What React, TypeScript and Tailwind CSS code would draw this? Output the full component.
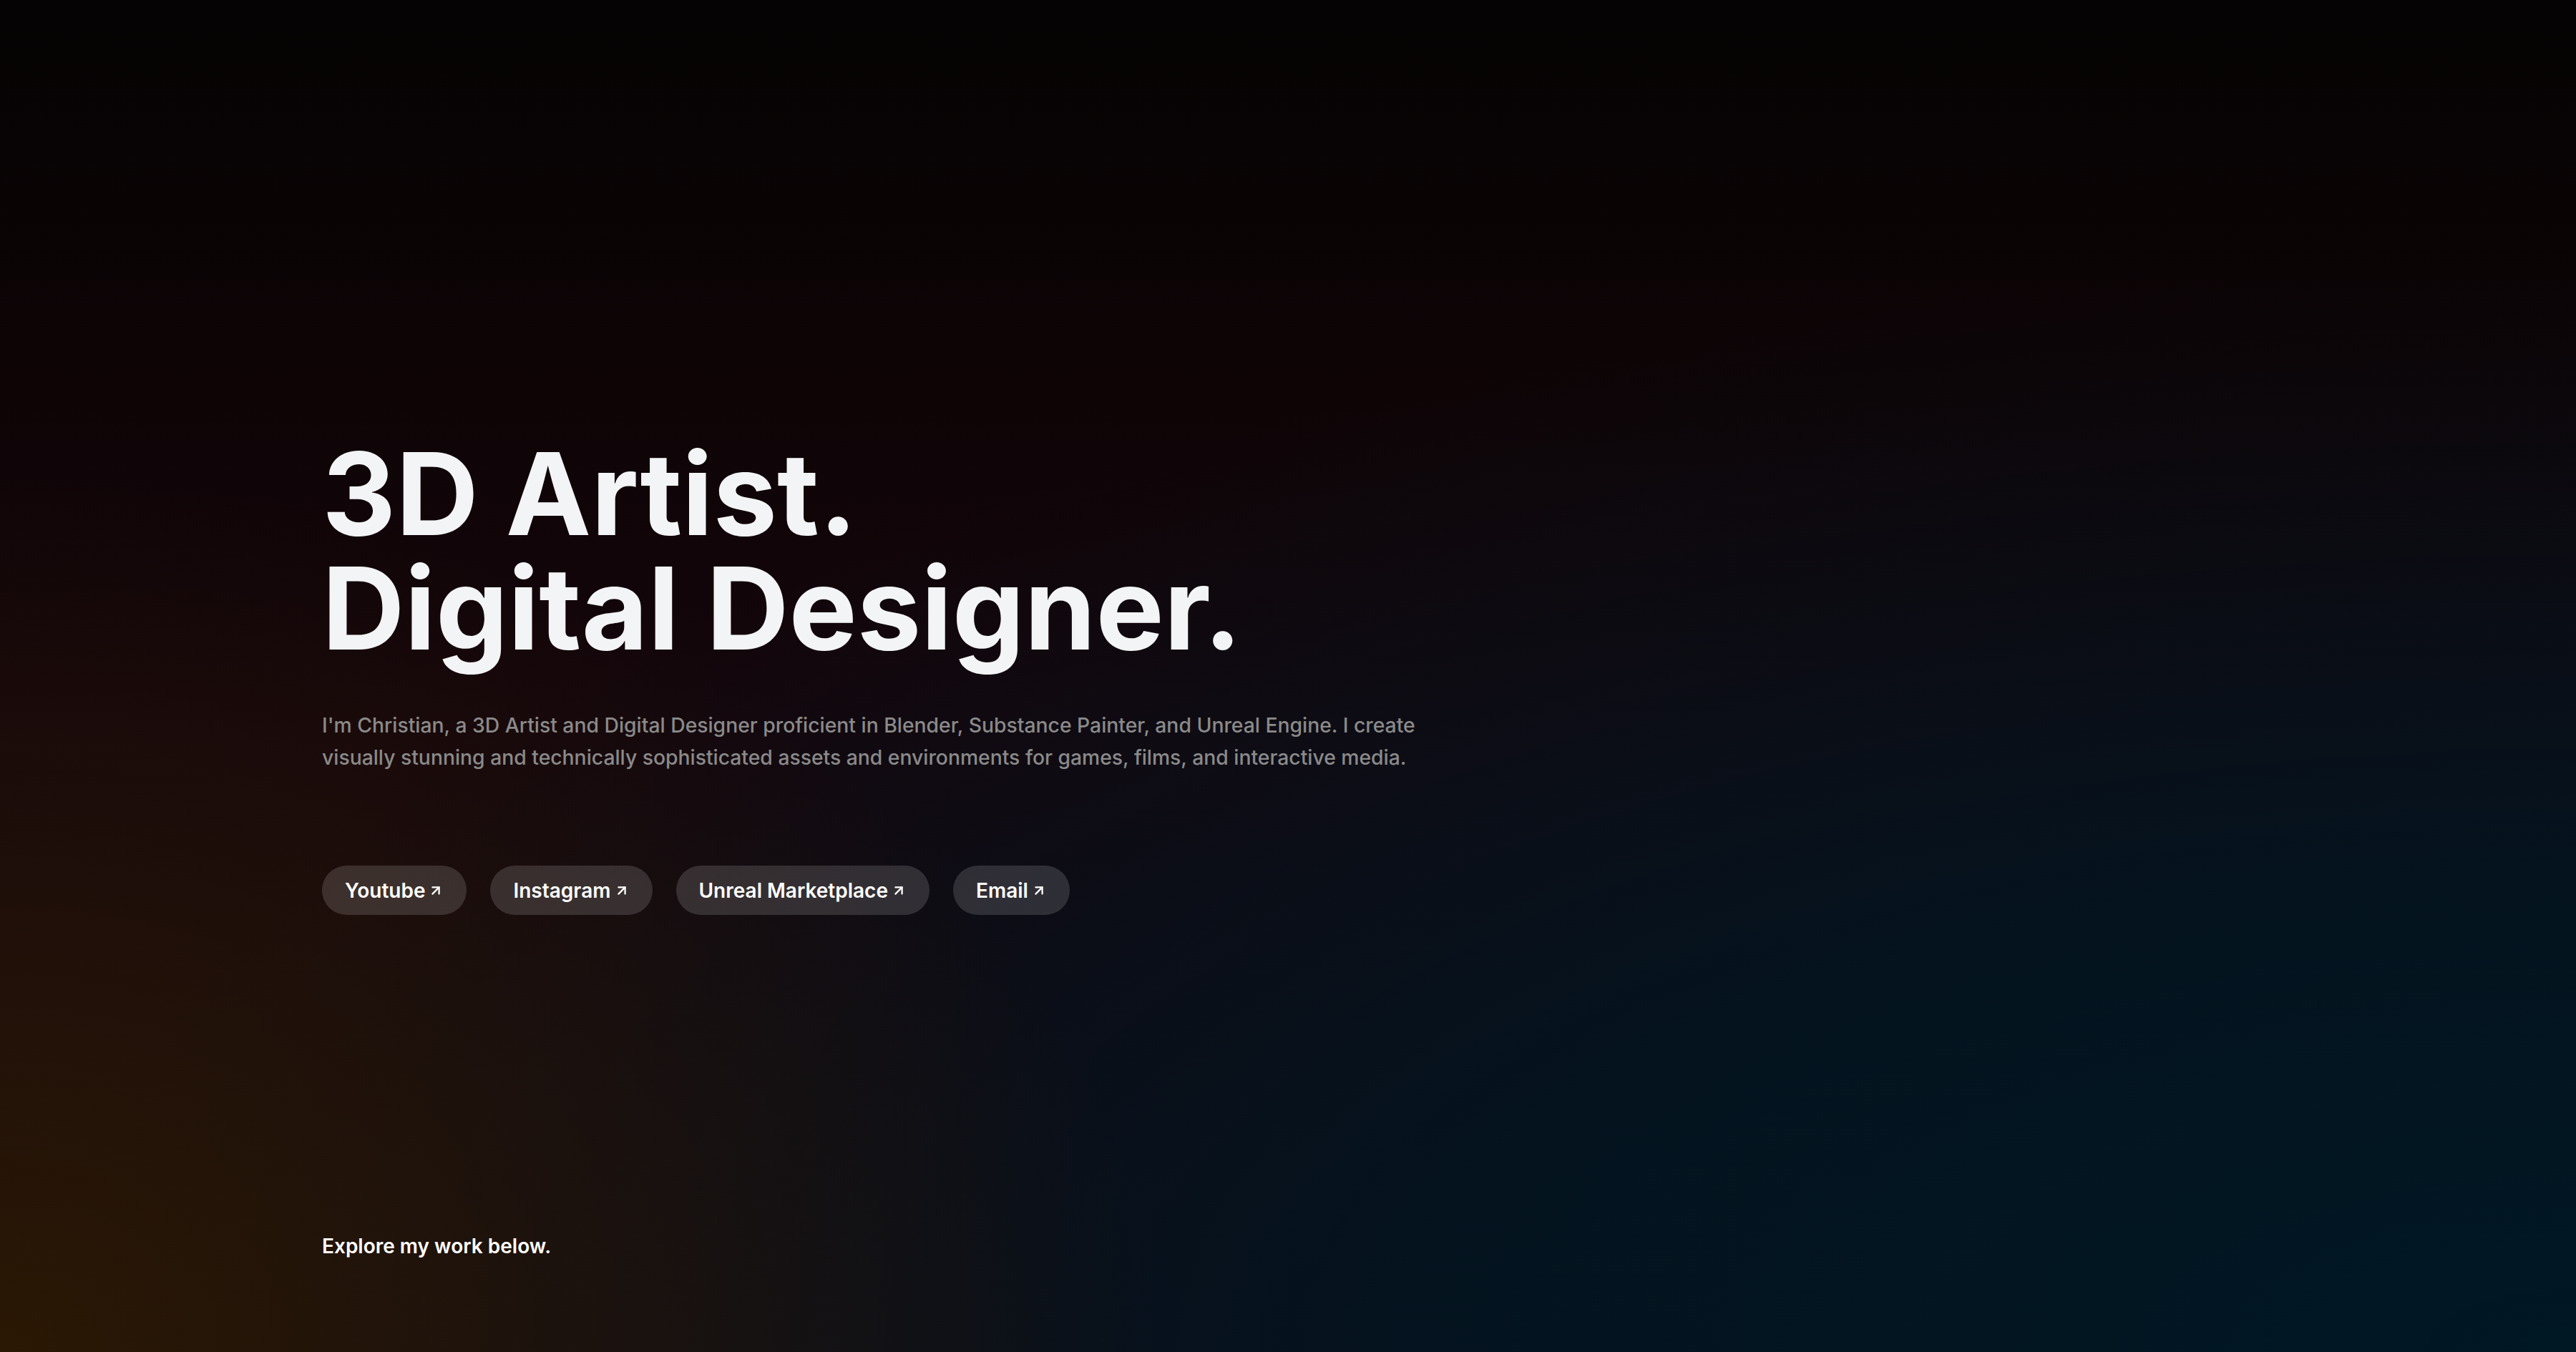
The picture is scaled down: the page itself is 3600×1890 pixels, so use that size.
import { ArrowUpRight } from 'lucide-react';

const links = ['Youtube', 'Instagram', 'Unreal Marketplace', 'Email'];

export default function App() {
  return (
    <main
      className="min-h-screen w-full font-['Inter',sans-serif] text-gray-100 bg-[radial-gradient(ellipse_45%_65%_at_0%_100%,#2a1804_0%,rgba(42,24,4,0.6)_40%,transparent_100%),radial-gradient(ellipse_100%_80%_at_100%_100%,#001824_0%,rgba(0,22,34,0.8)_45%,transparent_100%),linear-gradient(to_bottom,#050303_0%,#0e0406_30%,#15060c_55%,#130812_100%)]"
    >
      <div className="flex flex-col px-[450px] pt-[610px] pb-[128px] min-h-screen">
        <h1 className="text-[160px] leading-[160px] font-bold text-[#f3f4f6]">
          3D Artist.
          <br />
          Digital Designer.
        </h1>

        <p className="mt-[62px] text-[28.3px] leading-[45px] font-medium text-[#8a8a8a]">
          I'm Christian, a 3D Artist and Digital Designer proficient in Blender, Substance Painter, and Unreal Engine. I create
          <br />
          visually stunning and technically sophisticated assets and environments for games, films, and interactive media.
        </p>

        <div className="mt-[128px] flex items-center gap-[33px]">
          {links.map((label) => (
            <a
              key={label}
              href="#"
              className="flex h-[69px] items-center gap-[4px] rounded-full bg-white/[0.14] px-[32px] text-[28px] font-semibold text-white"
            >
              {label}
              <ArrowUpRight className="h-[22px] w-[22px]" strokeWidth={2.5} />
            </a>
          ))}
        </div>

        <p className="mt-auto text-[28px] leading-[40px] font-semibold text-white">
          Explore my work below.
        </p>
      </div>
    </main>
  );
}
